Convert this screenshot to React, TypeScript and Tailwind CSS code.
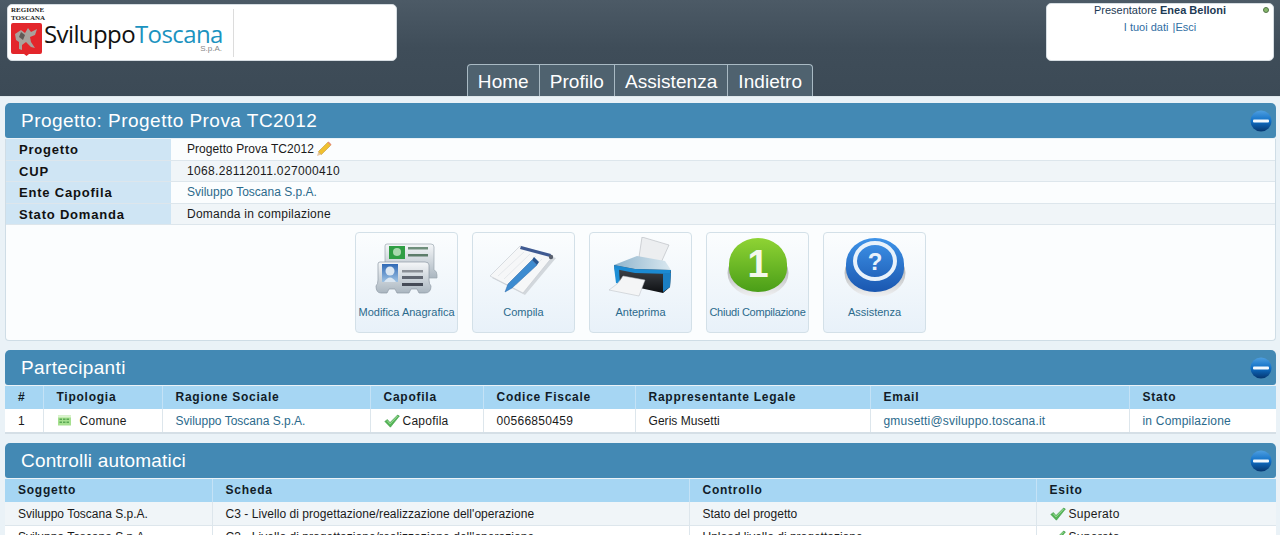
const linkColor = 'text-[#2b6a8c]';

function MinusIcon() {
    return (
        <svg width="22" height="22" viewBox="0 0 22 22" className="absolute right-[4px] top-[7px]">
            <defs>
                <linearGradient id="minusBg" x1="0" y1="0" x2="0" y2="1">
                    <stop offset="0" stopColor="#4f9fe0" />
                    <stop offset="0.5" stopColor="#0f6fc6" />
                    <stop offset="1" stopColor="#06366f" />
                </linearGradient>
            </defs>
            <circle cx="11" cy="11" r="10.5" fill="url(#minusBg)" />
            <rect x="3" y="9.5" width="16" height="3" rx="1" fill="#f2f8fd" />
        </svg>
    );
}

function CheckIcon() {
    return (
        <svg width="16" height="14" viewBox="0 0 16 14" className="shrink-0">
            <path d="M0.8 7.4 L3.4 5.6 L6 8.6 L13.6 1 L15.4 2 L6.4 13.2 Z" fill="#55b656" stroke="#3f9a48" strokeWidth="0.6" />
            <path d="M3.2 6.6 L6 9.8 L13.6 2" fill="none" stroke="#b5e6b0" strokeWidth="0.8" />
        </svg>
    );
}

function PencilIcon() {
    return (
        <svg width="16" height="16" viewBox="0 0 16 16" className="shrink-0">
            <path d="M1 15 L2.4 10.6 L5.4 13.6 Z" fill="#e8c9a0" />
            <path d="M2.4 10.6 L11.6 1.4 L14.6 4.4 L5.4 13.6 Z" fill="#f0c030" stroke="#b98a2a" strokeWidth="0.5" />
            <path d="M11.6 1.4 L12.6 0.5 L15.5 3.4 L14.6 4.4 Z" fill="#e88c70" />
        </svg>
    );
}

function BuildingIcon() {
    return (
        <svg width="13" height="11" viewBox="0 0 13 11" className="ml-[1px]">
            <rect x="0" y="0.5" width="13" height="10" fill="#a6e08f" />
            <rect x="0" y="0.5" width="13" height="2" fill="#dcf4cf" />
            <rect x="1.5" y="3.5" width="2.5" height="1.5" fill="#5aa855" />
            <rect x="5" y="3.5" width="2.5" height="1.5" fill="#5aa855" />
            <rect x="8.5" y="3.5" width="2.5" height="1.5" fill="#5aa855" />
            <rect x="1.5" y="6.5" width="2.5" height="1.5" fill="#5aa855" />
            <rect x="5" y="6.5" width="2.5" height="1.5" fill="#5aa855" />
            <rect x="8.5" y="6.5" width="2.5" height="1.5" fill="#5aa855" />
        </svg>
    );
}

function CardsIcon() {
    return (
        <svg width="64" height="54" viewBox="0 0 64 54">
            <defs>
                <linearGradient id="cardBody" x1="0" y1="0" x2="0" y2="1">
                    <stop offset="0" stopColor="#f5f7f9" />
                    <stop offset="1" stopColor="#aab6c0" />
                </linearGradient>
                <linearGradient id="photoBlue" x1="0" y1="0" x2="0" y2="1">
                    <stop offset="0" stopColor="#2f69b5" />
                    <stop offset="1" stopColor="#9fc3e4" />
                </linearGradient>
            </defs>
            <path d="M12 4 H56 Q59 4 59 7 V30 Q62 31 62 35 V38 H10 V6 Q10 4 12 4 Z" fill="url(#cardBody)" stroke="#9ba7b0" strokeWidth="0.7" />
            <rect x="14" y="6" width="16" height="13" fill="#2f9e44" />
            <circle cx="22" cy="12" r="4" fill="#a9d8ae" />
            <rect x="33" y="7" width="20" height="2.5" fill="#6f8f7b" />
            <rect x="33" y="14" width="20" height="2.5" fill="#5d7d6a" />
            <path d="M5 22 H50 Q54 22 54 25 V40 Q54 44 56 46 Q56 53 50 53 H44 L42 49 H36 L34 53 H22 L20 49 H14 L12 53 H6 Q1 53 1 46 Q3 44 3 40 V24 Q3 22 5 22 Z" fill="url(#cardBody)" stroke="#8e9aa5" strokeWidth="0.7" />
            <rect x="7" y="24" width="16" height="18" fill="url(#photoBlue)" />
            <circle cx="15" cy="31" r="4.5" fill="#dbe7f2" />
            <path d="M9 42 Q15 33 21 42 Z" fill="#dbe7f2" />
            <rect x="27" y="30" width="21" height="2.5" fill="#8a8f96" />
            <rect x="27" y="36" width="21" height="3" fill="#5f6570" />
            <rect x="27" y="43" width="21" height="3" fill="#454b57" />
        </svg>
    );
}

function NotepadIcon() {
    return (
        <svg width="68" height="56" viewBox="0 0 68 56">
            <path d="M2 39 L32 9 L66 19 L35 56 Z" fill="#d2d7dc" />
            <path d="M0 37 L30 7 L63 17 L33 54 Z" fill="#f6f7f8" stroke="#c2c8ce" strokeWidth="0.6" />
            <path d="M8 37 L34 13 M14 40 L40 15 M20 43 L46 17 M26 46 L52 20" stroke="#dfe3e7" strokeWidth="0.8" />
            <path d="M31 7 L61 15 L60 18 L30 10 Z" fill="#3f5a92" />
            <circle cx="61" cy="18" r="2.2" fill="#59606e" />
            <path d="M15 53 L18 45 L42 21 L47 26 L22 49 Z" fill="#3d8bd0" stroke="#2a69aa" strokeWidth="0.5" />
            <path d="M42 21 L44 18 L49 23 L47 26 Z" fill="#27558f" />
        </svg>
    );
}

function PrinterIcon() {
    return (
        <svg width="64" height="60" viewBox="0 0 64 60">
            <defs>
                <linearGradient id="printBody" x1="0" y1="0" x2="0" y2="1">
                    <stop offset="0" stopColor="#464a50" />
                    <stop offset="1" stopColor="#0e1013" />
                </linearGradient>
                <linearGradient id="printTop" x1="0" y1="0" x2="1" y2="0">
                    <stop offset="0" stopColor="#8fb4cc" />
                    <stop offset="1" stopColor="#d9e8f0" />
                </linearGradient>
            </defs>
            <path d="M30 20 L33 0 L60 8 L51 28 Z" fill="#eceef0" stroke="#a9adb2" strokeWidth="0.5" />
            <path d="M5 28 L28 19 L56 24 L62 33 L26 32 Z" fill="url(#printTop)" />
            <path d="M5 28 L26 32 L62 33 L61 50 L54 56 L8 46 Z" fill="url(#printBody)" />
            <path d="M5 28 L26 32 L62 33 L61 37 L26 36 L6 32 Z" fill="#1b8ad2" />
            <path d="M5 30 L10 32 L11 47 L7 46 Z" fill="#1d8fd6" />
            <path d="M54 36 L62 36 L61 50 L54 55 Z" fill="#1b7fc4" />
            <path d="M14 39 L36 43 L30 59 L0 53 Q9 48 14 39 Z" fill="#f4f5f6" stroke="#b9bdc2" strokeWidth="0.5" />
        </svg>
    );
}

function RoundButtonIcon({ kind }: { kind: 'green' | 'blue' }) {
    const id = kind === 'green' ? 'btnGreen' : 'btnBlue';
    return (
        <svg width="62" height="62" viewBox="0 0 62 62">
            <defs>
                <linearGradient id={id} x1="0" y1="0" x2="0" y2="1">
                    <stop offset="0" stopColor={kind === 'green' ? '#8fd334' : '#3e93e8'} />
                    <stop offset="1" stopColor={kind === 'green' ? '#4a9e18' : '#1a57b0'} />
                </linearGradient>
                <linearGradient id={id + 'Base'} x1="0" y1="0" x2="0" y2="1">
                    <stop offset="0" stopColor="#8d9094" />
                    <stop offset="1" stopColor="#f1f2f3" />
                </linearGradient>
            </defs>
            <ellipse cx="31" cy="37" rx="30.5" ry="24" fill={`url(#${id}Base)`} />
            <path d="M2 28 A29 26 0 0 1 60 28 L60 33 A29 23 0 0 1 2 33 Z" fill={`url(#${id})`} />
            {kind === 'green' ? (
                <text x="31" y="41" textAnchor="middle" fontFamily="'Liberation Sans', sans-serif" fontWeight="700" fontSize="38" fill="#f4f8ec">1</text>
            ) : (
                <>
                    <ellipse cx="31" cy="25" rx="20" ry="18" fill="none" stroke="#e8f2fb" strokeWidth="4" />
                    <text x="31" y="34" textAnchor="middle" fontFamily="'Liberation Sans', sans-serif" fontWeight="700" fontSize="24" fill="#e8f2fb">?</text>
                </>
            )}
        </svg>
    );
}

function LogoMark() {
    return (
        <div className="flex flex-col w-[32px] shrink-0">
            <span className="font-['Liberation_Serif',serif] font-bold text-[7px] leading-[8px] text-[#222]">REGIONE</span>
            <span className="font-['Liberation_Serif',serif] font-bold text-[7px] leading-[8px] text-[#222]">TOSCANA</span>
            <svg width="31" height="33" viewBox="0 0 31 33" className="mt-[1px]">
                <path d="M0 2 Q0 0 2 0 H29 Q31 0 31 2 V29 Q31 31 29 31 H18 L15.5 33 L13 31 H2 Q0 31 0 29 Z" fill="#e3262b" />
                <path d="M4 11 L10 7 L14 10 L17 5 L20 9 L26 6 L24 12 L19 14 L20 19 L24 25 L20 24 L15 19 L11 22 L11 27 L8 26 L8 19 L5 17 Z" fill="#a9a29c" />
                <path d="M10 9 L14 12 L12 17 L8 14 Z" fill="#5f5a56" />
            </svg>
        </div>
    );
}

function SectionHeader({ title, spacing }: { title: string; spacing: string }) {
    return (
        <div className={`relative h-[35px] bg-[#4389b4] rounded-t-[5px] rounded-b-[3px] pl-[16px] text-white text-[19px] leading-[35px] ${spacing}`}>
            {title}
            <MinusIcon />
        </div>
    );
}

const detailRows = [
    { label: 'Progetto', value: 'Progetto Prova TC2012', bg: 'bg-[#fbfdfe]', spacing: 'tracking-[0.05px]', pencil: true },
    { label: 'CUP', value: '1068.28112011.027000410', bg: 'bg-[#f0f5f8]', spacing: 'tracking-[0.35px]' },
    { label: 'Ente Capofila', value: 'Sviluppo Toscana S.p.A.', bg: 'bg-[#fbfdfe]', spacing: 'tracking-[0px]', link: true },
    { label: 'Stato Domanda', value: 'Domanda in compilazione', bg: 'bg-[#f0f5f8]', spacing: 'tracking-[0.25px]' },
];

const actions = [
    { label: 'Modifica Anagrafica', icon: <CardsIcon />, spacing: '' },
    { label: 'Compila', icon: <NotepadIcon />, spacing: '' },
    { label: 'Anteprima', icon: <PrinterIcon />, spacing: '' },
    { label: 'Chiudi Compilazione', icon: <RoundButtonIcon kind="green" />, spacing: 'tracking-[-0.25px]' },
    { label: 'Assistenza', icon: <RoundButtonIcon kind="blue" />, spacing: '' },
];

const thClass = 'h-[23px] pl-[13px] pb-[2px] text-left font-bold text-[12px] tracking-[0.75px] text-[#111c28] border-r border-[#c4e2f6] last:border-r-0';
const tdClass = 'h-[24px] pl-[13px] text-[12px] text-[#1a1a1a] border-r border-[#dde6ec] last:border-r-0';
const checkTdClass = 'h-[23px] pl-[13px] pt-[1px] text-[12px] text-[#1a1a1a] border-r border-[#dde6ec] last:border-r-0';

export default function App() {
    return (
        <div className="h-[535px] overflow-hidden bg-[#eaf2f7] font-['Liberation_Sans',Arial,sans-serif]">
            <header className="h-[97px] bg-gradient-to-b from-[#4c5a66] via-[#3f4d59] to-[#3c4a56] border-b-[1px] border-[#dfe8ec] flex flex-col">
                <div className="h-[64px] flex justify-between items-start">
                    <div className="ml-[7px] mt-[4px] w-[390px] h-[57px] bg-white rounded-[5px] border border-[#d6dde2] flex items-start pl-[3px] pt-[1px]">
                        <LogoMark />
                        <div className="ml-[1px] mt-[17px] w-[178px] flex flex-col items-end">
                            <div className="w-full text-[24px] leading-[22px] font-['Open_Sans',sans-serif] tracking-[-0.6px] text-[#111] whitespace-nowrap">
                                Sviluppo<span className="text-[#1b93c0]">Toscana</span>
                            </div>
                            <div className="text-[8px] leading-[8px] text-[#888]">S.p.A.</div>
                        </div>
                        <div className="ml-[11px] mt-[3px] h-[48px] border-r border-[#dcdcdc]" />
                    </div>
                    <div className="relative mr-[6px] mt-[3px] w-[228px] h-[58px] bg-white rounded-[5px] border border-[#d6dde2] text-center text-[11px]">
                        <div className="leading-[13px] text-[#1d3a54]">Presentatore <b>Enea Belloni</b></div>
                        <div className="mt-[3px] leading-[14px] text-[#2f6ea3]">I tuoi dati <span className="ml-[1px]">|</span>Esci</div>
                        <span className="absolute right-[4px] top-[3px] w-[6px] h-[6px] rounded-full bg-[#86b86a] border border-[#55734a]" />
                    </div>
                </div>
                <nav className="flex justify-center">
                    <div className="flex h-[32px] bg-[#4f626f] border border-b-0 border-[#a9bac4] rounded-t-[4px] text-white text-[19px] leading-[33px] tracking-[0.05px]">
                        <a className="px-[10px] border-r border-[#a9bac4]">Home</a>
                        <a className="px-[10px] border-r border-[#a9bac4]">Profilo</a>
                        <a className="px-[10px] border-r border-[#a9bac4]">Assistenza</a>
                        <a className="px-[10px]">Indietro</a>
                    </div>
                </nav>
            </header>

            <main className="px-[5px] pr-[4px] pt-[6px] flex flex-col">
                <section>
                    <SectionHeader title="Progetto: Progetto Prova TC2012" spacing="tracking-[0.47px]" />
                    <div className="bg-[#fbfdfe] border border-t-0 border-[#cfdde6] rounded-b-[4px] mt-[1px]">
                        {detailRows.map((row) => (
                            <div key={row.label} className={`flex h-[21.5px] border-b border-[#dde6ec] text-[12px] ${row.bg}`}>
                                <div className="w-[165px] pl-[13px] bg-[#cfe5f4] font-bold text-[13px] tracking-[0.8px] text-[#111] leading-[21px]">{row.label}</div>
                                <div className={`flex items-center gap-[2px] pl-[16px] ${row.spacing} ${row.link ? linkColor : 'text-[#1a1a1a]'}`}>
                                    {row.value}
                                    {row.pencil && <PencilIcon />}
                                </div>
                            </div>
                        ))}
                        <div className="h-[115px] pt-[7px] flex justify-center gap-[14px]">
                            {actions.map((action) => (
                                <div key={action.label} className="w-[103px] h-[101px] shrink-0 bg-gradient-to-b from-[#fbfdfe] to-[#e8f1f9] border border-[#d3e0e8] rounded-[4px] flex flex-col items-center">
                                    <div className="h-[68px] flex items-center justify-center">{action.icon}</div>
                                    <div className={`mt-[4px] text-[11px] leading-[14px] whitespace-nowrap ${linkColor} ${action.spacing}`}>{action.label}</div>
                                </div>
                            ))}
                        </div>
                    </div>
                </section>

                <section className="mt-[9px]">
                    <SectionHeader title="Partecipanti" spacing="tracking-[0.37px]" />
                    <table className="w-full table-fixed border-collapse mt-[1px] bg-white border-b-2 border-[#d5dfe6]">
                        <colgroup>
                            <col className="w-[38px]" />
                            <col className="w-[119px]" />
                            <col className="w-[208px]" />
                            <col className="w-[113px]" />
                            <col className="w-[152px]" />
                            <col className="w-[235px]" />
                            <col className="w-[259px]" />
                            <col />
                        </colgroup>
                        <thead className="bg-[#a6d6f3]">
                            <tr>
                                {['#', 'Tipologia', 'Ragione Sociale', 'Capofila', 'Codice Fiscale', 'Rappresentante Legale', 'Email', 'Stato'].map((h) => (
                                    <th key={h} className={thClass}>{h}</th>
                                ))}
                            </tr>
                        </thead>
                        <tbody>
                            <tr>
                                <td className={tdClass}>1</td>
                                <td className={`${tdClass} tracking-[0.3px]`}>
                                    <div className="flex items-center gap-[9px]"><BuildingIcon /> Comune</div>
                                </td>
                                <td className={`${tdClass} ${linkColor}`}>Sviluppo Toscana S.p.A.</td>
                                <td className={`${tdClass} tracking-[0.25px]`}>
                                    <div className="flex items-center gap-[3px]"><CheckIcon /> Capofila</div>
                                </td>
                                <td className={`${tdClass} tracking-[0.3px]`}>00566850459</td>
                                <td className={`${tdClass} tracking-[0.05px]`}>Geris Musetti</td>
                                <td className={`${tdClass} ${linkColor} tracking-[0.2px]`}>gmusetti@sviluppo.toscana.it</td>
                                <td className={`${tdClass} ${linkColor} tracking-[0.2px]`}>in Compilazione</td>
                            </tr>
                        </tbody>
                    </table>
                </section>

                <section className="mt-[9px]">
                    <SectionHeader title="Controlli automatici" spacing="tracking-[0.17px]" />
                    <table className="w-full table-fixed border-collapse mt-[1px]">
                        <colgroup>
                            <col className="w-[207px]" />
                            <col className="w-[477px]" />
                            <col className="w-[347px]" />
                            <col />
                        </colgroup>
                        <thead className="bg-[#a6d6f3]">
                            <tr>
                                {['Soggetto', 'Scheda', 'Controllo', 'Esito'].map((h) => (
                                    <th key={h} className={thClass}>{h}</th>
                                ))}
                            </tr>
                        </thead>
                        <tbody>
                            <tr className="bg-[#f0f5f8] border-b border-[#dde6ec]">
                                <td className={checkTdClass}>Sviluppo Toscana S.p.A.</td>
                                <td className={`${checkTdClass} tracking-[0.05px]`}>C3 - Livello di progettazione/realizzazione dell'operazione</td>
                                <td className={checkTdClass}>Stato del progetto</td>
                                <td className={`${checkTdClass} tracking-[0.3px]`}>
                                    <div className="flex items-center gap-[3px]"><CheckIcon /> Superato</div>
                                </td>
                            </tr>
                            <tr className="bg-white">
                                <td className={checkTdClass}>Sviluppo Toscana S.p.A.</td>
                                <td className={`${checkTdClass} tracking-[0.05px]`}>C3 - Livello di progettazione/realizzazione dell'operazione</td>
                                <td className={checkTdClass}>Upload livello di progettazione</td>
                                <td className={`${checkTdClass} tracking-[0.3px]`}>
                                    <div className="flex items-center gap-[3px]"><CheckIcon /> Superato</div>
                                </td>
                            </tr>
                        </tbody>
                    </table>
                </section>
            </main>
        </div>
    );
}
